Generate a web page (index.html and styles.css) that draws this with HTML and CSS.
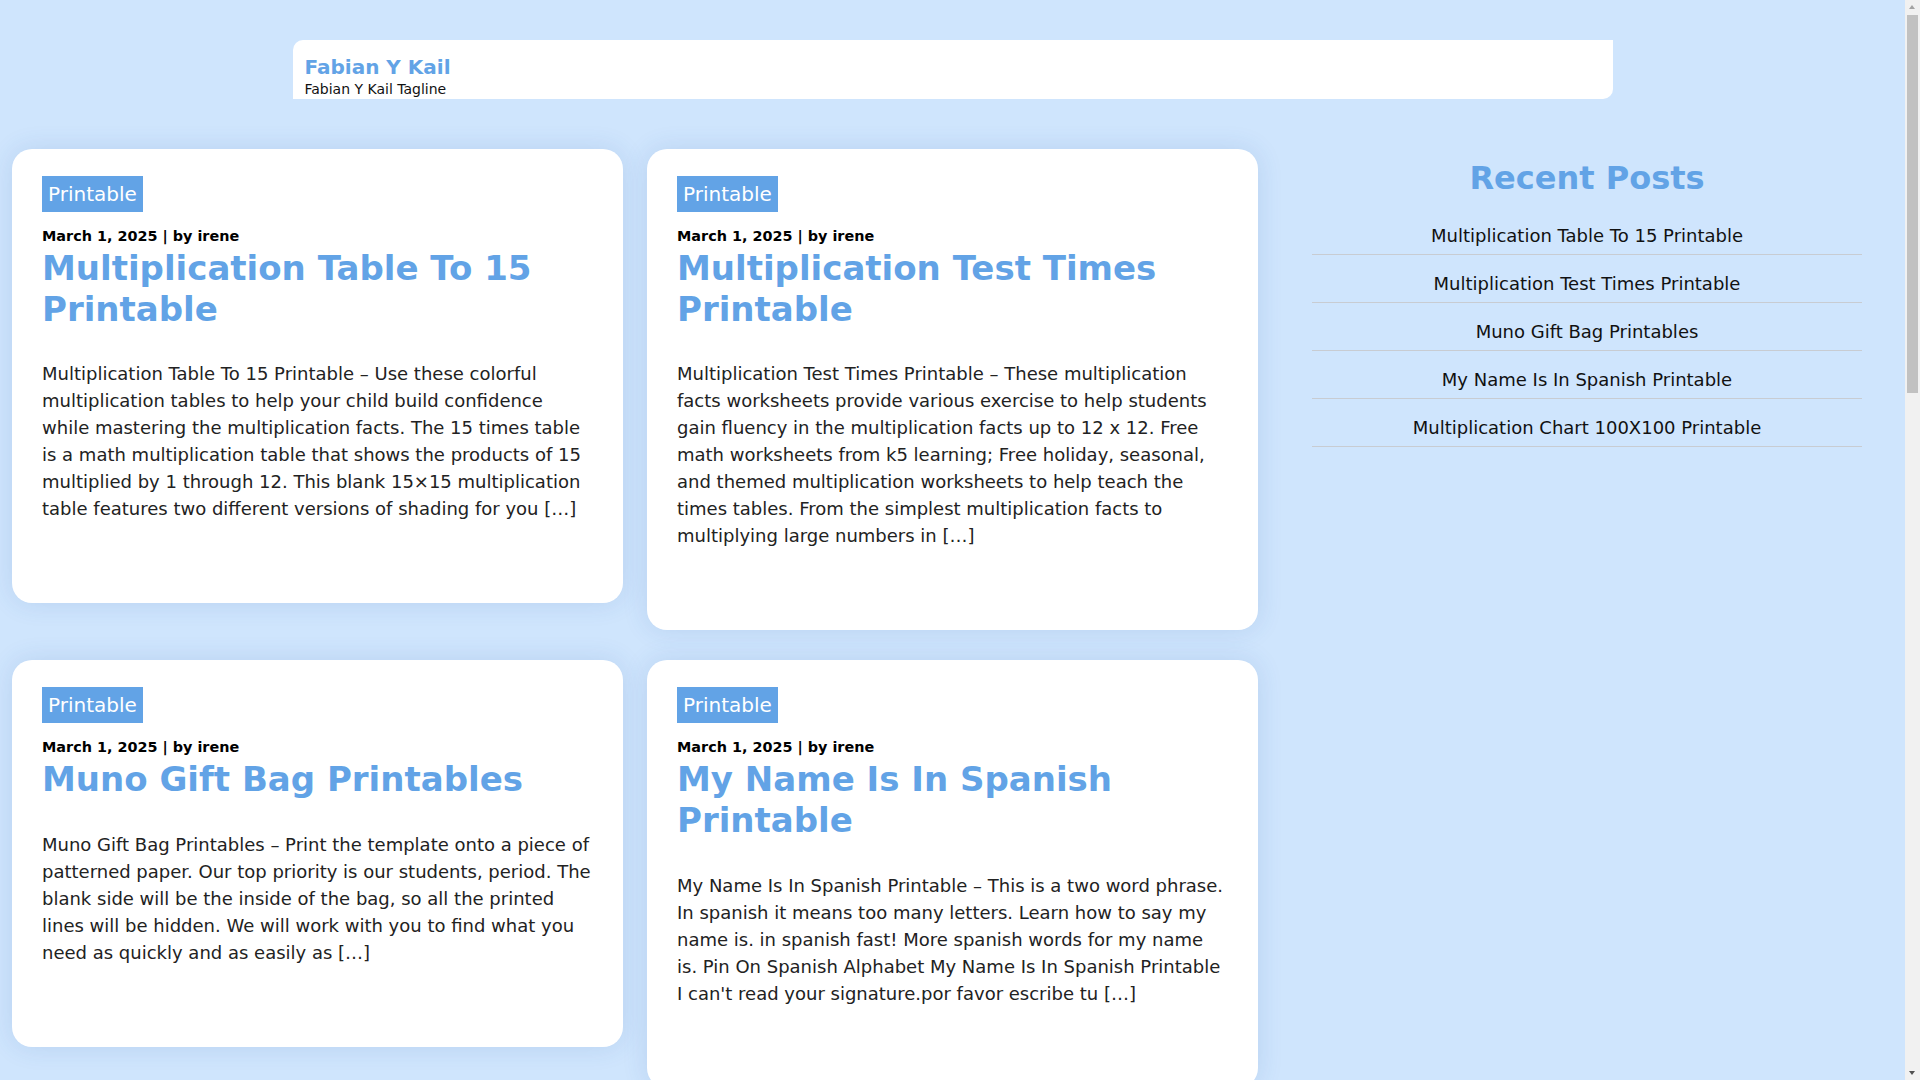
FILE: index.html
```html
<!DOCTYPE html>
<html lang="en">
<head>
<meta charset="utf-8">
<title>Fabian Y Kail</title>
<link rel="stylesheet" href="styles.css">
</head>
<body>
<div class="page">
<header class="site-header">
  <div class="site-title">Fabian Y Kail</div>
  <div class="site-tagline">Fabian Y Kail Tagline</div>
</header>

<div class="layout">
  <main class="posts">
    <article class="card">
      <span class="badge">Printable</span>
      <div class="meta">March 1, 2025 | by irene</div>
      <h2 class="post-title">Multiplication Table To 15 Printable</h2>
      <p class="excerpt">Multiplication Table To 15 Printable – Use these colorful multiplication tables to help your child build confidence while mastering the multiplication facts. The 15 times table is a math multiplication table that shows the products of 15 multiplied by 1 through 12. This blank 15×15 multiplication table features two different versions of shading for you […]</p>
    </article>
    <article class="card">
      <span class="badge">Printable</span>
      <div class="meta">March 1, 2025 | by irene</div>
      <h2 class="post-title">Multiplication Test Times Printable</h2>
      <p class="excerpt">Multiplication Test Times Printable – These multiplication facts worksheets provide various exercise to help students gain fluency in the multiplication facts up to 12 x 12. Free math worksheets from k5 learning; Free holiday, seasonal, and themed multiplication worksheets to help teach the times tables. From the simplest multiplication facts to multiplying large numbers in […]</p>
    </article>
    <article class="card">
      <span class="badge">Printable</span>
      <div class="meta">March 1, 2025 | by irene</div>
      <h2 class="post-title">Muno Gift Bag Printables</h2>
      <p class="excerpt">Muno Gift Bag Printables – Print the template onto a piece of patterned paper. Our top priority is our students, period. The blank side will be the inside of the bag, so all the printed lines will be hidden. We will work with you to find what you need as quickly and as easily as […]</p>
    </article>
    <article class="card">
      <span class="badge">Printable</span>
      <div class="meta">March 1, 2025 | by irene</div>
      <h2 class="post-title">My Name Is In Spanish Printable</h2>
      <p class="excerpt">My Name Is In Spanish Printable – This is a two word phrase. In spanish it means too many letters. Learn how to say my name is. in spanish fast! More spanish words for my name is. Pin On Spanish Alphabet My Name Is In Spanish Printable I can't read your signature.por favor escribe tu […]</p>
    </article>
    <article class="card">
      <span class="badge">Printable</span>
      <div class="meta">March 1, 2025 | by irene</div>
      <h2 class="post-title">Multiplication Chart 100X100 Printable</h2>
      <p class="excerpt">Multiplication Chart 100X100 Printable – A multiplication chart is a handy tool for students learning their times tables. This large chart covers every product from 1 x 1 all the way up to 100 x 100, so it works well for practice, reference and checking answers at home or in the classroom […]</p>
    </article>
    <article class="card">
      <span class="badge">Printable</span>
      <div class="meta">February 28, 2025 | by irene</div>
      <h2 class="post-title">Multiplication Table 1 To 20 Printable</h2>
      <p class="excerpt">Multiplication Table 1 To 20 Printable – Print these free multiplication tables and keep them nearby while your child studies. Each table lists the products from 1 to 20, which makes it easy to spot patterns and to memorize the facts quickly and with confidence […]</p>
    </article>
    <article class="card">
      <span class="badge">Printable</span>
      <div class="meta">February 28, 2025 | by irene</div>
      <h2 class="post-title">Free Printable Gift Tags</h2>
      <p class="excerpt">Free Printable Gift Tags – Add a personal touch to every present with these free printable gift tags. Simply print them on card stock, cut them out and attach them with a ribbon or string. They are perfect for birthdays, holidays and every special occasion in between […]</p>
    </article>
    <article class="card">
      <span class="badge">Printable</span>
      <div class="meta">February 28, 2025 | by irene</div>
      <h2 class="post-title">Spanish Alphabet Printable</h2>
      <p class="excerpt">Spanish Alphabet Printable – Learn the letters of the Spanish alphabet with this simple printable chart. Each letter comes with an example word and a picture, so beginners can practice pronunciation and spelling at the same time, at home or at school […]</p>
    </article>
  </main>

  <aside class="sidebar">
    <h2 class="widget-title">Recent Posts</h2>
    <ul class="recent-list">
      <li><a href="#">Multiplication Table To 15 Printable</a></li>
      <li><a href="#">Multiplication Test Times Printable</a></li>
      <li><a href="#">Muno Gift Bag Printables</a></li>
      <li><a href="#">My Name Is In Spanish Printable</a></li>
      <li><a href="#">Multiplication Chart 100X100 Printable</a></li>
    </ul>
  </aside>
</div>
</div>

<div class="scrollbar" aria-hidden="true">
  <div class="sb-arrow sb-up"></div>
  <div class="sb-thumb"></div>
  <div class="sb-arrow sb-down"></div>
</div>
</body>
</html>
```

FILE: styles.css
```css
html, body {
  margin: 0;
  padding: 0;
}

body {
  background: #cfe5fd;
  font-family: "DejaVu Sans", sans-serif;
  color: #222;
}

.page {
  margin-right: 15px;
}

.site-header {
  width: 1320px;
  margin: 40px auto 0;
  box-sizing: border-box;
  background: #ffffff;
  border-radius: 10px 0 10px 0;
  padding: 15px 12px 1px;
}

.site-title {
  font-size: 20px;
  line-height: 25px;
  font-weight: bold;
  color: #62a3e6;
}

.site-tagline {
  font-size: 14px;
  line-height: 18px;
  color: #111;
}

.layout {
  display: flex;
  align-items: flex-start;
  margin-top: 50px;
  padding: 0 0 60px 12px;
}

.posts {
  width: 1246px;
  flex: none;
  display: grid;
  grid-template-columns: 1fr 1fr;
  column-gap: 24px;
  row-gap: 30px;
  align-items: start;
}

.card {
  background: #ffffff;
  border-radius: 20px;
  box-shadow: 0 0 26px rgba(40, 90, 160, 0.14);
  padding: 27px 30px 81px;
}

.badge {
  display: inline-block;
  background: #62a3e6;
  color: #ffffff;
  font-size: 20px;
  line-height: 24px;
  padding: 6px 6px;
}

.meta {
  margin-top: 16px;
  font-size: 14.4px;
  line-height: 17px;
  font-weight: bold;
  color: #000;
}

.post-title {
  margin: 3px 0 0;
  font-size: 34px;
  line-height: 40.7px;
  font-weight: bold;
  color: #62a3e6;
}

.excerpt {
  margin: 31px 0 0;
  font-size: 18px;
  line-height: 27px;
  color: #222;
}

.sidebar {
  width: 550px;
  flex: none;
  margin-left: 54px;
  padding-top: 11px;
  text-align: center;
}

.widget-title {
  margin: 0;
  font-size: 32px;
  line-height: 37px;
  font-weight: bold;
  color: #62a3e6;
}

.recent-list {
  list-style: none;
  margin: 10px 0 0;
  padding: 0;
}

.recent-list li {
  padding: 15px 0 5px;
  border-bottom: 1px solid #c8ccd2;
  font-size: 18px;
  line-height: 27px;
}

.recent-list a {
  color: #111;
  text-decoration: none;
}

/* drawn browser scrollbar */
.scrollbar {
  position: fixed;
  top: 0;
  right: 0;
  width: 15px;
  height: 100vh;
  background: #f1f1f1;
  display: flex;
  flex-direction: column;
  align-items: center;
}

.sb-arrow {
  width: 15px;
  height: 15px;
  flex: none;
  position: relative;
}

.sb-arrow::after {
  content: "";
  position: absolute;
  left: 4px;
  width: 0;
  height: 0;
  border-left: 3.5px solid transparent;
  border-right: 3.5px solid transparent;
}

.sb-up::after {
  top: 5px;
  border-bottom: 4px solid #a3a3a3;
}

.sb-down::after {
  top: 6px;
  border-top: 4px solid #505050;
}

.sb-thumb {
  width: 11px;
  height: 378px;
  margin-left: 0;
  background: #c1c1c1;
  flex: none;
}

.sb-down {
  margin-top: auto;
}
```
